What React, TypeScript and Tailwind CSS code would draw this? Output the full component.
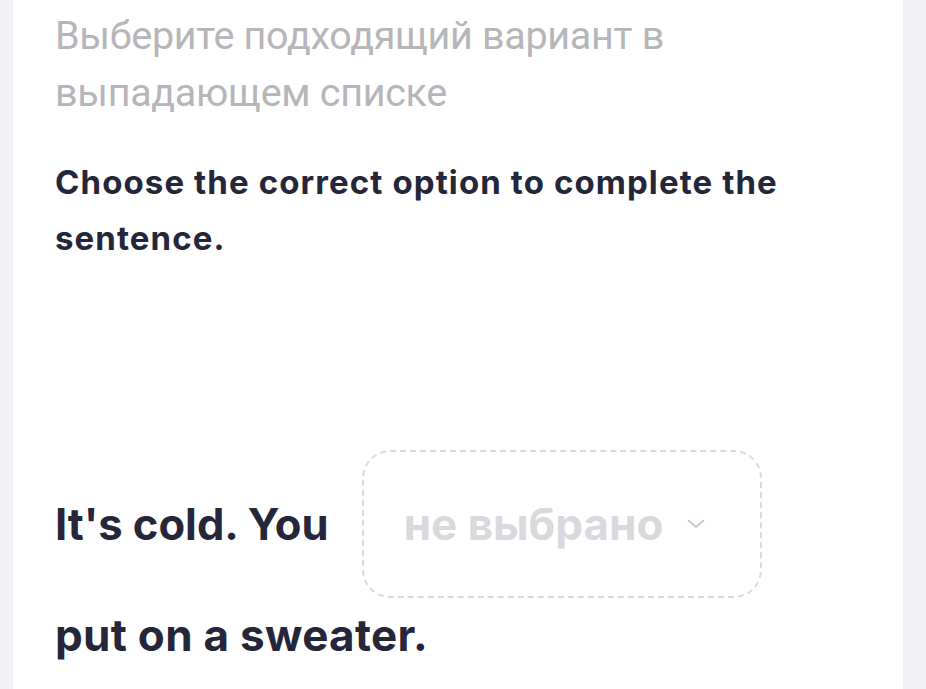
import React from 'react';

const inter = { fontFamily: 'Inter, "Noto Sans", sans-serif' };

function Chevron() {
  return (
    <svg width="18" height="10" viewBox="0 0 18 10" fill="none" className="shrink-0">
      <path d="M1.5 1.5L9 8L16.5 1.5" stroke="#c9c9cf" strokeWidth="2" strokeLinecap="round" strokeLinejoin="round" />
    </svg>
  );
}

export default function App() {
  return (
    <div className="min-h-[689px] w-[926px] bg-[#f3f3f7] overflow-hidden">
      <div className="ml-[13px] w-[890px] min-h-[689px] bg-white pl-[42px] pr-[40px] pt-[7px]">
        {/* task hint */}
        <p
          className="text-[39.5px] leading-[57px] text-[#b5b5ba] tracking-[-0.3px]"
          style={{ fontFamily: 'Roboto, "Noto Sans", sans-serif' }}
        >
          Выберите подходящий вариант в<br />
          выпадающем списке
        </p>

        <h2
          className="mt-[33px] text-[33px] leading-[56px] font-bold text-[#25263a] tracking-[1.1px] w-[800px]"
          style={inter}
        >
          Choose the correct option to complete the<br />
          sentence.
        </h2>

        {/* sentence with blank */}
        <div className="mt-[184px] flex flex-wrap items-center gap-x-[33px] gap-y-[11px]" style={inter}>
          <span className="text-[43.5px] leading-[53px] font-bold text-[#25263a]">It's cold. You</span>
          <button className="w-[400px] h-[148px] rounded-[28px] border-2 border-dashed border-[#dadade] flex items-center pl-[40px] gap-[24px]">
            <span className="text-[44px] font-bold text-[#d9d9dd]">не выбрано</span>
            <Chevron />
          </button>
          <span className="w-full text-[44px] leading-[53px] font-bold text-[#25263a] tracking-[0.3px]">
            put on a sweater.
          </span>
        </div>
      </div>
    </div>
  );
}
